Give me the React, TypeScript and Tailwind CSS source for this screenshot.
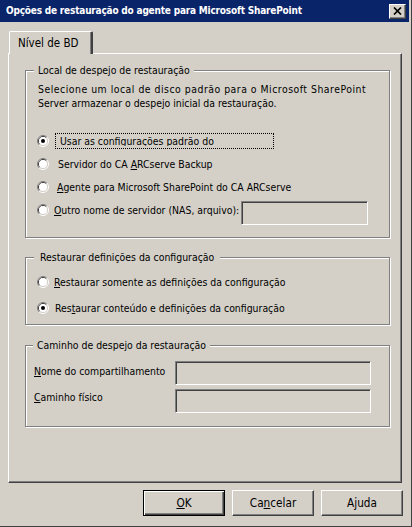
import type { ReactNode } from "react"

const font = { fontFamily: '"DejaVu Sans Condensed", "DejaVu Sans", sans-serif' }

function Radio({ checked = false }: { checked?: boolean }) {
  return (
    <svg width="12" height="12" viewBox="0 0 12 12" className="shrink-0">
      <path d="M2.11 9.89 A5.5 5.5 0 0 1 9.89 2.11" fill="none" stroke="#808080" />
      <path d="M9.89 2.11 A5.5 5.5 0 0 1 2.11 9.89" fill="none" stroke="#ffffff" />
      <path d="M2.82 9.18 A4.5 4.5 0 0 1 9.18 2.82" fill="none" stroke="#404040" />
      <path d="M9.18 2.82 A4.5 4.5 0 0 1 2.82 9.18" fill="none" stroke="#d4d0c8" />
      <circle cx="6" cy="6" r="4" fill="#ffffff" />
      {checked ? <circle cx="6" cy="6" r="2" fill="#000000" /> : null}
    </svg>
  )
}

function GroupBox({ title, titleClass, className, children }: { title: string; titleClass: string; className: string; children: ReactNode }) {
  return (
    <div className={`relative ml-[16px] w-[365px] border border-[#808080] shadow-[inset_1px_1px_0_#fff,1px_1px_0_#fff] ${className}`}>
      <span className={`absolute -top-[8px] bg-[#d4d0c8] leading-[14px] ${titleClass}`}>{title}</span>
      {children}
    </div>
  )
}

function Sunken({ className }: { className: string }) {
  return (
    <div
      className={`h-[24px] border border-t-[#808080] border-l-[#808080] border-r-white border-b-white bg-[#d4d0c8] shadow-[inset_1px_1px_0_#404040,inset_-1px_-1px_0_#d4d0c8] ${className}`}
    />
  )
}

function Button({ children, isDefault = false }: { children: ReactNode; isDefault?: boolean }) {
  return (
    <button
      type="button"
      className={`h-[26px] w-[82px] bg-[#d4d0c8] text-[11.7px] leading-[14px] text-black ${
        isDefault
          ? "border border-black shadow-[inset_1px_1px_0_#fff,inset_-1px_-1px_0_#404040,inset_-2px_-2px_0_#808080]"
          : "border border-t-white border-l-white border-r-[#404040] border-b-[#404040] shadow-[inset_-1px_-1px_0_#808080]"
      }`}
      style={font}
    >
      {children}
    </button>
  )
}

export default function App() {
  return (
    <div
      className="flex h-[527px] w-[412px] flex-col overflow-hidden border-r border-b border-r-[#404040] border-b-[#404040] bg-[#d4d0c8] text-[10.4px] leading-[14px] text-black"
      style={font}
    >
      {/* title bar */}
      <div className="flex h-[22px] w-[409px] shrink-0 items-center bg-[#0a246a] pl-[6px] pr-[3px]">
        <span className="text-[10px] font-bold tracking-[-0.2px] text-white">Opções de restauração do agente para Microsoft SharePoint</span>
        <div className="ml-auto flex h-[15px] w-[17px] items-center justify-center border border-t-white border-l-white border-r-[#404040] border-b-[#404040] bg-[#d4d0c8] shadow-[inset_-1px_-1px_0_#808080]">
          <svg width="9" height="8" viewBox="0 0 9 8">
            <path d="M1 0.5 L8 7.5 M8 0.5 L1 7.5" stroke="#000" strokeWidth="1.7" />
          </svg>
        </div>
      </div>

      <div className="flex flex-col pl-[8px]">
        {/* tab */}
        <div className="relative z-10 -mb-[1px] ml-[1px] mt-[9px] flex h-[23px] w-[84px] items-center rounded-tl-[2px] rounded-tr-[2px] border-l border-t border-l-white border-t-white border-r-2 border-r-[#404040] bg-[#d4d0c8] pl-[8px] text-[11.5px] shadow-[inset_-1px_0_0_#808080]">
          Nível de BD
        </div>

        {/* tab panel */}
        <div className="flex h-[430px] w-[394px] flex-col border-l border-t border-l-white border-t-white border-r border-b border-r-[#404040] border-b-[#404040] shadow-[inset_-1px_-1px_0_#808080]">
          <GroupBox title="Local de despejo de restauração" titleClass="left-[8px] px-[4px]" className="mt-[16px] pb-[12px] pt-[11px]">
            <p className="pl-[12px]">
              <span className="tracking-[0.5px]">Selecione um local de disco padrão para o Microsoft SharePoint</span>
              <br />
              Server armazenar o despejo inicial da restauração.
            </p>
            <div className="mt-[19px] flex flex-col pl-[11px]">
              <div className="flex h-[23px] items-center">
                <Radio checked />
                <span className="ml-[6px] flex h-[16px] w-[219px] items-start overflow-hidden border border-dotted border-black pl-[4px] pt-[1px]">
                  <span className="h-[11px] overflow-hidden leading-[13px]">
                    <u>U</u>sar as configurações padrão do
                  </span>
                </span>
              </div>
              <div className="flex h-[23px] items-center">
                <Radio />
                <span className="ml-[9px]">
                  Servidor do CA <u>A</u>RCserve Backup
                </span>
              </div>
              <div className="flex h-[23px] items-center">
                <Radio />
                <span className="ml-[8px]">
                  <u>A</u>gente para Microsoft SharePoint do CA ARCserve
                </span>
              </div>
              <div className="flex items-start">
                <div className="flex h-[23px] items-center whitespace-nowrap">
                  <Radio />
                  <span className="ml-[5px]">
                    <u>O</u>utro nome de servidor (NAS, arquivo):
                  </span>
                </div>
                <Sunken className="ml-auto mr-[21px] mt-[3px] w-[127px] shrink-0" />
              </div>
            </div>
          </GroupBox>

          <GroupBox title="Restaurar definições da configuração" titleClass="left-[8px] px-[6px]" className="mt-[19px] pb-[3px] pt-[11px]">
            <div className="flex flex-col pl-[11px]">
              <div className="flex h-[26px] items-center">
                <Radio />
                <span className="ml-[5px]">
                  <u>R</u>estaurar somente as definições da configuração
                </span>
              </div>
              <div className="flex h-[26px] items-center">
                <Radio checked />
                <span className="ml-[6px]">
                  Res<u>t</u>aurar conteúdo e definições da configuração
                </span>
              </div>
            </div>
          </GroupBox>

          <GroupBox title="Caminho de despejo da restauração" titleClass="left-[7px] px-[4px]" className="mt-[20px] pb-[13px] pt-[15px]">
            <div className="flex flex-col gap-[4px] pl-[8px]">
              <div className="flex items-start">
                <span className="mt-[3px] w-[141px]">
                  <u>N</u>ome do compartilhamento
                </span>
                <Sunken className="w-[196px]" />
              </div>
              <div className="flex items-start">
                <span className="mt-[1px] w-[141px]">
                  <u>C</u>aminho físico
                </span>
                <Sunken className="w-[196px]" />
              </div>
            </div>
          </GroupBox>
        </div>

        {/* buttons */}
        <div className="mt-[7px] flex w-[395px] justify-end gap-[7px]">
          <Button isDefault>
            <u>O</u>K
          </Button>
          <Button>
            Ca<u>n</u>celar
          </Button>
          <Button>Ajuda</Button>
        </div>
      </div>
    </div>
  )
}
